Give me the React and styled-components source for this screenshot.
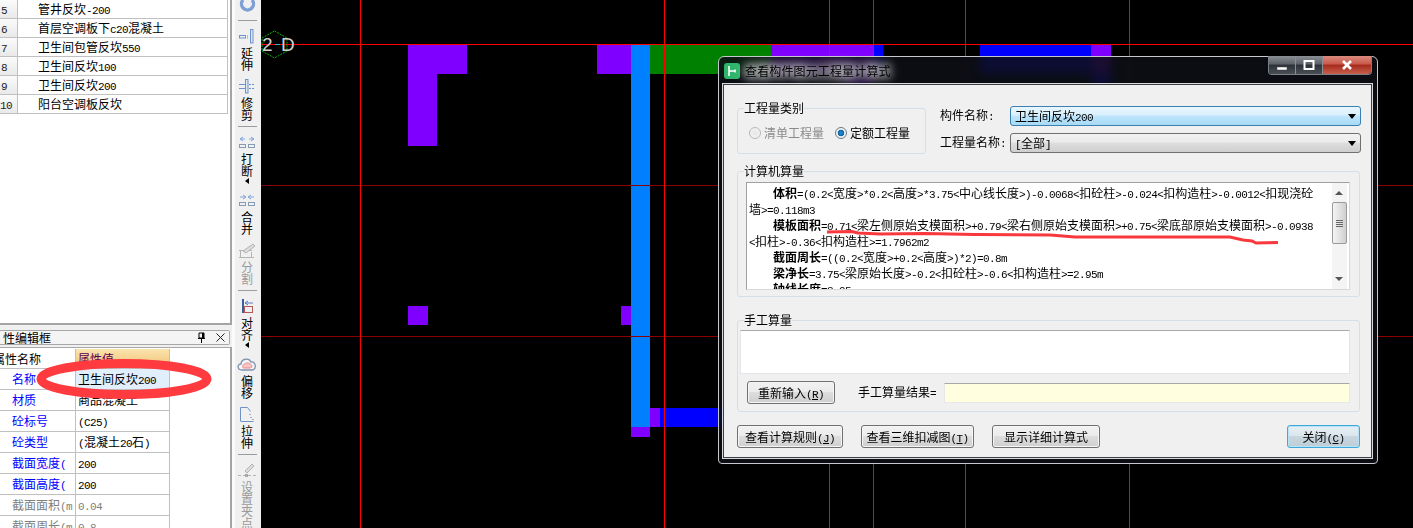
import React from 'react'
import styled, { createGlobalStyle } from 'styled-components'

const GlobalStyle = createGlobalStyle`
    html, body {
        margin: 0;
        padding: 0;
        background: #000;
    }
    * {
        box-sizing: border-box;
    }
`

const Page = styled.div`
    display: flex;
    width: 1413px;
    height: 528px;
    overflow: hidden;
    font-family: "Noto Sans CJK SC", "Liberation Sans", sans-serif;
    font-size: 12px;
    line-height: 16px;
    color: #000;
`

const Latin = styled.span`
    font-family: "Liberation Mono", monospace;
    font-size: 11px;
    letter-spacing: -0.6px;
    font-weight: inherit;
`

// half width ascii next to full width hanzi, like the SimSun of the original
const Mixed = ({ text }) => (
    <>
        {text.split(/([\x00-\x7f]+)/).filter(Boolean).map((part, i) =>
            /^[\x00-\x7f]/.test(part) ? <Latin key={i}>{part}</Latin> : <span key={i}>{part}</span>
        )}
    </>
)

const Hot = ({ letter }) => <Latin>(<u>{letter}</u>)</Latin>

/* left side */

const Side = styled.div`
    position: relative;
    display: flex;
    flex-direction: column;
    flex: none;
    width: 232px;
    height: 528px;
    background: #f0f0f0;
`

const ListPanel = styled.div`
    flex: none;
    height: 325px;
    background: #fff;
    border-right: 2px solid #a4a4a4;
    border-bottom: 2px solid #a4a4a4;
`

const ListRow = styled.div`
    display: flex;
    width: 228px;
    height: 19px;
    line-height: 18px;
    border-bottom: 1px solid #c0c0c0;
    border-right: 1px solid #c0c0c0;
`

const ListNum = styled.div`
    flex: none;
    width: 18px;
    padding-right: 9px;
    text-align: center;
    white-space: nowrap;
    background: linear-gradient(#fbfbfb, #e9e9e9);
    border-right: 1px solid #c0c0c0;
    color: #222;
`

const ListName = styled.div`
    padding-left: 20px;
    white-space: nowrap;
`

const PanelHeader = styled.div`
    display: flex;
    align-items: center;
    flex: none;
    width: 230px;
    height: 15px;
    margin-top: 5px;
    overflow: hidden;
    background: #f4f4f4;
    border: 1px solid #a8a8a8;
    border-left: none;
    border-radius: 0 2px 2px 0;
`

const PanelTitle = styled.div`
    flex: 1;
    padding-left: 3px;
    line-height: 14px;
    white-space: nowrap;
`

const PanelButton = styled.svg`
    flex: none;
    width: 11px;
    height: 11px;
    margin-right: ${(p) => p.$mr}px;
`

const PropBody = styled.div`
    flex: 1;
    margin-top: 2px;
    padding-top: 1px;
    background: #fff;
    border-top: 1px solid #a8a8a8;
    border-right: 2px solid #a4a4a4;
    overflow: hidden;
`

const PropRow = styled.div`
    display: flex;
    width: 170px;
    height: ${(p) => (p.$head ? 20 : 21)}px;
    line-height: 20px;
    border-bottom: 1px solid #c0c0c0;
`

const PropName = styled.div`
    flex: none;
    width: 76px;
    overflow: hidden;
    white-space: nowrap;
    padding-left: ${(p) => (p.$head ? 0 : 12)}px;
    text-indent: ${(p) => (p.$head ? -7 : 0)}px;
    color: ${(p) => (p.$head ? '#000' : p.$off ? '#808080' : '#0000ff')};
    border-right: 1px solid #c0c0c0;
`

const PropValue = styled.div`
    flex: none;
    width: 94px;
    padding-left: 2px;
    overflow: hidden;
    white-space: nowrap;
    color: ${(p) => (p.$head ? '#5c0050' : p.$off ? '#808080' : '#000')};
    background: ${(p) =>
        p.$head ? 'linear-gradient(#fbe3ae, #f2c274)' : p.$sel ? '#e1eefb' : 'transparent'};
    border-right: 1px solid #c0c0c0;
`

const Oval = styled.svg`
    position: absolute;
    left: 36px;
    top: 359px;
    width: 176px;
    height: 40px;
`

/* vertical toolbar */

const Toolbar = styled.div`
    display: flex;
    flex-direction: column;
    align-items: center;
    flex: none;
    width: 29px;
    height: 528px;
    padding-right: 2px;
    overflow: hidden;
    background: #f0f0f0;
    border-left: 3px solid #fbfbfb;
`

const ToolSep = styled.div`
    flex: none;
    width: 19px;
    height: 1px;
    margin-top: 5px;
    background: #9c9c9c;
`

const ToolItem = styled.div`
    display: flex;
    flex-direction: column;
    align-items: center;
    flex: none;
    margin-top: 8px;
`

const ToolIcon = styled.svg`
    display: block;
    flex: none;
    width: 20px;
    height: 15px;
`

const ToolLabel = styled.div`
    width: 12px;
    margin-top: 3px;
    line-height: 12px;
    color: ${(p) => (p.$off ? '#9a9a9a' : '#000')};
`

const ToolArrow = styled.div`
    width: 0;
    height: 0;
    margin-top: 1px;
    margin-bottom: 1px;
    border-top: 3px solid transparent;
    border-bottom: 3px solid transparent;
    border-right: 4px solid #000;
`

const BLUE = '#6f93c9'
const GREY = '#b4b4b4'

const icons = {
    extend: (
        <>
            <rect x="2.5" y="6.5" width="6" height="2.5" fill="none" stroke={BLUE} />
            <path d="M10 7h1M10 9h1" stroke={BLUE} />
            <rect x="13.5" y="0.5" width="2.5" height="13.5" fill="#dce6f5" stroke={BLUE} />
        </>
    ),
    trim: (
        <>
            <rect x="8.5" y="0.5" width="2.5" height="13.5" fill="#dce6f5" stroke={BLUE} />
            <path d="M2 5.5h6M2 9.5h6" stroke={BLUE} />
            <path d="M12 5.5h6M12 9.5h6" stroke={BLUE} strokeDasharray="2 1" />
        </>
    ),
    breakLine: (
        <>
            <path d="M3 4h5M6 2l-3 2 3 2M12 4h5M14 2l3 2-3 2" stroke="#7fa4dc" fill="none" />
            <rect x="2.5" y="9.5" width="6" height="3" fill="none" stroke="#8a9bb5" />
            <rect x="11.5" y="9.5" width="6" height="3" fill="none" stroke="#8a9bb5" />
        </>
    ),
    merge: (
        <>
            <path d="M3 4h5M6 2l3 2-3 2M12 4h5M14 2l-3 2 3 2" stroke="#7fa4dc" fill="none" />
            <rect x="2.5" y="9.5" width="6" height="3" fill="none" stroke="#8a9bb5" />
            <rect x="11.5" y="9.5" width="6" height="3" fill="none" stroke="#8a9bb5" />
        </>
    ),
    split: (
        <>
            <path d="M2 7.5h13M3.5 7.5v6.5M14.5 9v5M2 14.5h15" stroke={GREY} fill="none" />
            <path d="M6 8l10-7 2 2-9 7z" fill="#dcdcdc" stroke={GREY} />
        </>
    ),
    align: (
        <>
            <path d="M6 0v14" stroke="#3c5f9c" strokeWidth="2" />
            <path d="M8 4h8M11 2l-3 2 3 2" stroke="#5b7fc0" fill="none" />
            <rect x="7.5" y="7.5" width="8" height="6" fill="none" stroke="#b05a5a" />
        </>
    ),
    offset: (
        <>
            <path d="M5 13c-5 0-5-6-1-6 0-5 8-7 10-2 5-1 6 8 1 8z" fill="#f4f6fa" stroke="#7f93ad" strokeWidth="1.3" />
            <path d="M7 11c-2 0-2-3 0-3 0-2 5-3 6-1 2 0 3 4 0 4z" fill="#f6c4c4" stroke="#e88" />
        </>
    ),
    stretch: (
        <>
            <path d="M3.5 14V0.5h7l3 4" fill="none" stroke={BLUE} />
            <path d="M3.5 14.5h13" stroke={BLUE} />
            <path d="M13 7v1M14 10v1M16 12v1" stroke="#667" />
        </>
    ),
    grip: (
        <>
            <path d="M8 8l7-7 2 2-7 7z" fill="#dcdcdc" stroke={GREY} />
            <path d="M1 12.5h18" stroke={GREY} strokeDasharray="3 2" />
            <rect x="8" y="11" width="3" height="3" fill="#a8a8a8" />
        </>
    ),
}

const Tool = ({ icon, label, off, arrow }) => (
    <ToolItem>
        <ToolIcon viewBox="0 0 20 15">{icons[icon]}</ToolIcon>
        <ToolLabel $off={off}>{label}</ToolLabel>
        {arrow && <ToolArrow />}
    </ToolItem>
)

/* cad canvas */

const Canvas = styled.div`
    position: relative;
    flex: 1;
    height: 528px;
    background: #000;
`

const Drawing = styled.svg`
    display: block;
    width: 1152px;
    height: 528px;
`

const PURPLE = '#8000ff'
const SKY = '#0080ff'
const PURE_BLUE = '#0000ff'

const shapes = [
    [408, 45, 59, 29, PURPLE],
    [408, 74, 29, 72, PURPLE],
    [597, 45, 34, 29, PURPLE],
    [650, 45, 121, 29, '#008000'],
    [771, 45, 102, 29, PURPLE],
    [845, 74, 28, 30, PURPLE],
    [873, 45, 10, 29, PURE_BLUE],
    [980, 45, 111, 29, PURE_BLUE],
    [1091, 45, 20, 29, PURPLE],
    [1091, 74, 20, 40, PURE_BLUE],
    [408, 306, 20, 19, PURPLE],
    [621, 306, 10, 19, PURPLE],
    [631, 427, 19, 10, PURPLE],
    [650, 408, 10, 19, PURPLE],
    [660, 408, 120, 19, PURE_BLUE],
    [631, 45, 19, 382, SKY],
]

const verticals = [360, 664, 829, 873, 965, 1129]

/* dialog */

const Dialog = styled.div`
    position: absolute;
    left: 457px;
    top: 56px;
    width: 660px;
    height: 408px;
    padding: 0 5px 0 4px;
    background: rgba(12, 15, 22, 0.88);
    backdrop-filter: blur(5px);
    border: 1px solid #c4c8cc;
    border-radius: 6px 6px 4px 4px;
`

const TitleBar = styled.div`
    display: flex;
    align-items: center;
    height: 27px;
`

const TitleIcon = styled.svg`
    flex: none;
    width: 16px;
    height: 16px;
    margin-left: 1px;
`

const TitleText = styled.div`
    flex: 1;
    margin-left: 5px;
    letter-spacing: 0.14px;
    text-shadow: 0 0 8px #fff, 0 0 10px #fff, 0 0 14px rgba(255, 255, 255, 0.9);
`

const CaptionButtons = styled.div`
    display: flex;
    align-self: flex-start;
    flex: none;
    height: 19px;
    margin-top: -1px;
    border: 1px solid #7c8087;
    border-top: none;
    border-radius: 0 0 4px 4px;
    overflow: hidden;
`

const CaptionButton = styled.div`
    display: flex;
    align-items: center;
    justify-content: center;
    width: ${(p) => (p.$close ? 48 : 27)}px;
    border-right: ${(p) => (p.$close ? 'none' : '1px solid #8a8e94')};
    background: ${(p) =>
        p.$close
            ? 'linear-gradient(#d98a7e, #c9594a 45%, #a52a1c 50%, #c8604c)'
            : 'linear-gradient(#8a8f96, #5c6168 45%, #2d3238 50%, #4a4f56)'};
`

const Client = styled.div`
    height: 374px;
    padding: 16px 11px 0 13px;
    background: #f0f0f0;
    border: 1px solid #3a3f45;
    box-shadow: 0 0 0 1px rgba(255, 255, 255, 0.85);
`

const TopRow = styled.div`
    display: flex;
    gap: 14px;
`

const Group = styled.fieldset`
    min-width: 0;
    margin: ${(p) => p.$mt || 0}px 0 0 0;
    padding: ${(p) => p.$pad};
    width: ${(p) => p.$w}px;
    flex: none;
    border: 1px solid #d5dfe6;
    border-radius: 3px;
`

const Legend = styled.legend`
    margin-left: ${(p) => p.$ml}px;
    padding: 0;
    height: 14px;
    line-height: 14px;
`

const RadioRow = styled.div`
    display: flex;
    align-items: center;
    height: 16px;
`

const RadioDot = styled.span`
    flex: none;
    width: 12px;
    height: 12px;
    margin-left: ${(p) => p.$ml}px;
    margin-right: 3px;
    border-radius: 50%;
    border: 1px solid ${(p) => (p.$on ? '#6c7a86' : '#b8b8b8')};
    background: ${(p) =>
        p.$on
            ? 'radial-gradient(circle, #1f8fd6 0, #14659f 3px, #e8eef2 3.6px, #fff 100%)'
            : 'radial-gradient(circle, #e6e6e6, #f6f6f6)'};
`

const RadioText = styled.span`
    color: ${(p) => (p.$off ? '#8a8a8a' : '#000')};
    white-space: nowrap;
`

const FormCol = styled.div`
    display: flex;
    flex-direction: column;
    flex: 1;
    gap: 7px;
    margin: 5px -1px 0 0;
`

const FormRow = styled.div`
    display: flex;
    align-items: center;
    height: 20px;
`

const FormLabel = styled.div`
    flex: none;
    width: 70px;
    white-space: nowrap;
`

const Combo = styled.div`
    position: relative;
    flex: 1;
    height: 20px;
    padding-left: 4px;
    line-height: 18px;
    border: 1px solid ${(p) => (p.$active ? '#3c7fb1' : '#707070')};
    border-radius: 3px;
    background: ${(p) =>
        p.$active
            ? 'linear-gradient(#eaf6fd, #d9f0fc 45%, #bee6fd 50%, #a7d9f5)'
            : 'linear-gradient(#f2f2f2, #ebebeb 45%, #dddddd 50%, #cfcfcf)'};

    &::after {
        content: '';
        position: absolute;
        right: 4px;
        top: 7px;
        border-left: 4px solid transparent;
        border-right: 4px solid transparent;
        border-top: 5px solid #000;
    }
`

const CalcBox = styled.div`
    position: relative;
    display: flex;
    height: 108px;
    overflow: hidden;
    background: #fff;
    border: 1px solid #a0a0a0;
    border-right-color: #d8d8d8;
    border-bottom-color: #d8d8d8;
`

const CalcText = styled.div`
    flex: 1;
    padding: 2px 0 0 2px;
    overflow: hidden;
`

const CalcLine = styled.div`
    height: 16px;
    padding-left: ${(p) => (p.$indent ? 24 : 0)}px;
    white-space: nowrap;
`

const Bold = styled.b`
    font-weight: 700;
`

const ScrollTrack = styled.div`
    position: relative;
    flex: none;
    width: 15px;
    margin-right: 2px;
    background: #f4f4f4;
`

const ScrollArrow = styled.div`
    position: absolute;
    left: 3px;
    ${(p) => (p.$up ? 'top: 8px;' : 'bottom: 8px;')}
    border-left: 4px solid transparent;
    border-right: 4px solid transparent;
    ${(p) => (p.$up ? 'border-bottom' : 'border-top')}: 4px solid #555;
`

const ScrollThumb = styled.div`
    position: absolute;
    left: 0;
    right: 0;
    top: 19px;
    height: 42px;
    display: flex;
    flex-direction: column;
    align-items: center;
    justify-content: center;
    gap: 1px;
    background: linear-gradient(90deg, #f4f4f4, #e2e2e2 50%, #cfcfcf);
    border: 1px solid #9a9a9a;
    border-radius: 2px;
`

const Grip = styled.span`
    width: 7px;
    height: 1px;
    background: #666;
`

const Underline = styled.svg`
    position: absolute;
    left: 79px;
    top: 45px;
    width: 460px;
    height: 18px;
`

const HandBox = styled.div`
    height: 44px;
    background: #fff;
    border: 1px solid #e2e6ea;
    border-top: 1px solid #a8a8a8;
    border-radius: 1px;
`

const ResultRow = styled.div`
    display: flex;
    align-items: center;
    height: 23px;
    margin: 7px 0 0 7px;
`

const ResultLabel = styled.div`
    flex: none;
    margin-left: 23px;
    white-space: nowrap;
`

const ResultInput = styled.div`
    flex: 1;
    height: 20px;
    margin-left: 8px;
    background: #ffffe0;
    border: 1px solid #e8e8e8;
    border-top: 1px solid #a8a8a8;
`

const Button = styled.div`
    flex: none;
    width: ${(p) => p.$w}px;
    height: 23px;
    line-height: 21px;
    text-align: center;
    white-space: nowrap;
    border: 1px solid ${(p) => (p.$main ? '#3ca8dc' : '#707070')};
    border-radius: 3px;
    box-shadow: inset 0 0 0 1px ${(p) => (p.$main ? '#b6e3f7' : '#f6f6f6')};
    background: ${(p) =>
        p.$main
            ? 'linear-gradient(#e6eff5, #dbe6ed 45%, #c9d6df 50%, #bfcdd7)'
            : 'linear-gradient(#f2f2f2, #ebebeb 45%, #dddddd 50%, #cfcfcf)'};
`

const ButtonRow = styled.div`
    display: flex;
    gap: 18px;
    margin-top: 13px;
`

const CloseSlot = styled.div`
    margin-left: auto;
`

const listRows = [
    ['5', '管井反坎-200'],
    ['6', '首层空调板下c20混凝土'],
    ['7', '卫生间包管反坎550'],
    ['8', '卫生间反坎100'],
    ['9', '卫生间反坎200'],
    ['10', '阳台空调板反坎'],
]

const propRows = [
    ['名称', '卫生间反坎200', false, true],
    ['材质', '商品混凝土'],
    ['砼标号', '(C25)'],
    ['砼类型', '(混凝土20石)'],
    ['截面宽度(', '200'],
    ['截面高度(', '200'],
    ['截面面积(m', '0.04', true],
    ['截面周长(m', '0.8', true],
]

const calcLines = [
    ['体积', '=(0.2<宽度>*0.2<高度>*3.75<中心线长度>)-0.0068<扣砼柱>-0.024<扣构造柱>-0.0012<扣现浇砼'],
    [null, '墙>=0.118m3'],
    ['模板面积', '=0.71<梁左侧原始支模面积>+0.79<梁右侧原始支模面积>+0.75<梁底部原始支模面积>-0.0938'],
    [null, '<扣柱>-0.36<扣构造柱>=1.7962m2'],
    ['截面周长', '=((0.2<宽度>+0.2<高度>)*2)=0.8m'],
    ['梁净长', '=3.75<梁原始长度>-0.2<扣砼柱>-0.6<扣构造柱>=2.95m'],
    ['轴线长度', '=3.95'],
]

export default function App() {
    return (
        <Page>
            <GlobalStyle />
            <Side>
                <ListPanel>
                    {listRows.map(([num, name]) => (
                        <ListRow key={num}>
                            <ListNum><Mixed text={num} /></ListNum>
                            <ListName><Mixed text={name} /></ListName>
                        </ListRow>
                    ))}
                </ListPanel>
                <PanelHeader>
                    <PanelTitle>性编辑框</PanelTitle>
                    <PanelButton $mr={8} viewBox="0 0 11 11">
                        <path d="M3 1h5v5H3zM2 6.5h7M5.5 7v4" fill="none" stroke="#000" />
                        <rect x="6" y="1" width="2" height="5" />
                    </PanelButton>
                    <PanelButton $mr={3} viewBox="0 0 11 11">
                        <path d="M1.5 1.5l8 8M9.5 1.5l-8 8" stroke="#222" />
                    </PanelButton>
                </PanelHeader>
                <PropBody>
                    <PropRow $head>
                        <PropName $head>属性名称</PropName>
                        <PropValue $head>属性值</PropValue>
                    </PropRow>
                    {propRows.map(([name, value, off, sel]) => (
                        <PropRow key={name}>
                            <PropName $off={off}><Mixed text={name} /></PropName>
                            <PropValue $off={off} $sel={sel}><Mixed text={value} /></PropValue>
                        </PropRow>
                    ))}
                </PropBody>
                <Oval viewBox="0 0 176 40">
                    <ellipse cx="88" cy="20" rx="83" ry="15.5" fill="none" stroke="#ff3b3f" strokeWidth="9" />
                </Oval>
            </Side>

            <Toolbar>
                <ToolIcon viewBox="0 0 20 15">
                    <path d="M6 0a6 6 0 1 0 9 0" fill="none" stroke="#7e9fd5" strokeWidth="3.4" />
                </ToolIcon>
                <ToolSep />
                <Tool icon="extend" label="延伸" />
                <Tool icon="trim" label="修剪" />
                <ToolSep />
                <Tool icon="breakLine" label="打断" arrow />
                <Tool icon="merge" label="合并" />
                <Tool icon="split" label="分割" off />
                <ToolSep />
                <Tool icon="align" label="对齐" arrow />
                <Tool icon="offset" label="偏移" />
                <Tool icon="stretch" label="拉伸" />
                <ToolSep />
                <Tool icon="grip" label="设置夹点" off />
            </Toolbar>

            <Canvas>
                <Drawing viewBox="261 0 1152 528">
                    {shapes.map(([x, y, w, h, fill], i) => (
                        <rect key={i} x={x} y={y} width={w} height={h} fill={fill} />
                    ))}
                    <path d="M261 185.5H1413M261 336.5H1413" stroke="#8b0000" />
                    {verticals.map((x) => (
                        <path key={x} d={`M${x + 0.5} 0V528`} stroke="#ff0000" />
                    ))}
                    <path d="M261 44.5H1413" stroke="#ff0000" />
                    <polygon points="274.5,31 287,38 287,51 274.5,58 262,51 262,38" fill="none" stroke="#00b000" strokeDasharray="2 1" />
                    <path d="M275 44.5h5" stroke="#20c0c0" />
                    <text x="262" y="51" fontFamily="Liberation Sans" fontSize="19" fill="#d0d0d0">2</text>
                    <text x="281" y="51" fontFamily="Liberation Sans" fontSize="19" fill="#d0d0d0">D</text>
                </Drawing>

                <Dialog>
                    <TitleBar>
                        <TitleIcon viewBox="0 0 16 16">
                            <rect width="16" height="16" rx="3" fill="#2fb56b" />
                            <path d="M5 3v10M5 8h6M11 6.5v3" stroke="#fff" strokeWidth="1.6" fill="none" />
                        </TitleIcon>
                        <TitleText>查看构件图元工程量计算式</TitleText>
                        <CaptionButtons>
                            <CaptionButton>
                                <svg width="12" height="12" viewBox="0 0 12 12">
                                    <rect x="1" y="8" width="10" height="3" fill="#fff" stroke="#444" strokeWidth="0.5" />
                                </svg>
                            </CaptionButton>
                            <CaptionButton>
                                <svg width="12" height="12" viewBox="0 0 12 12">
                                    <rect x="1.5" y="2" width="9" height="8" fill="none" stroke="#fff" strokeWidth="2" />
                                </svg>
                            </CaptionButton>
                            <CaptionButton $close>
                                <svg width="12" height="12" viewBox="0 0 12 12">
                                    <path d="M2 2l8 8M10 2l-8 8" stroke="#fff" strokeWidth="2.6" />
                                </svg>
                            </CaptionButton>
                        </CaptionButtons>
                    </TitleBar>

                    <Client>
                        <TopRow>
                            <Group $w={189} $pad="10px 0 12px 11px">
                                <Legend $ml={-5}>工程量类别</Legend>
                                <RadioRow>
                                    <RadioDot $ml={0} />
                                    <RadioText $off>清单工程量</RadioText>
                                    <RadioDot $ml={11} $on />
                                    <RadioText>定额工程量</RadioText>
                                </RadioRow>
                            </Group>
                            <FormCol>
                                <FormRow>
                                    <FormLabel><Mixed text="构件名称:" /></FormLabel>
                                    <Combo $active><Mixed text="卫生间反坎200" /></Combo>
                                </FormRow>
                                <FormRow>
                                    <FormLabel><Mixed text="工程量名称:" /></FormLabel>
                                    <Combo><Mixed text="[全部]" /></Combo>
                                </FormRow>
                            </FormCol>
                        </TopRow>

                        <Group $w={623} $mt={10} $pad="4px 9px 6px 8px">
                            <Legend $ml={-2}>计算机算量</Legend>
                            <CalcBox>
                                <CalcText>
                                    {calcLines.map(([head, rest], i) => (
                                        <CalcLine key={i} $indent={!!head}>
                                            {head && <Bold>{head}</Bold>}
                                            <Mixed text={rest} />
                                        </CalcLine>
                                    ))}
                                </CalcText>
                                <ScrollTrack>
                                    <ScrollArrow $up />
                                    <ScrollThumb>
                                        <Grip /><Grip /><Grip /><Grip />
                                    </ScrollThumb>
                                    <ScrollArrow />
                                </ScrollTrack>
                                <Underline viewBox="826 228 460 18">
                                    <path
                                        d="M827 232L852 231.5L858 233L880 234L925 233.5L978 234.5L1050 235L1075 237L1230 237L1243 240L1252 241L1256 243L1278 242.5"
                                        fill="none"
                                        stroke="#f8383c"
                                        strokeWidth="3"
                                    />
                                </Underline>
                            </CalcBox>
                        </Group>

                        <Group $w={623} $mt={16} $pad="3px 9px 7px 2px">
                            <Legend $ml={4}>手工算量</Legend>
                            <HandBox />
                            <ResultRow>
                                <Button $w={88}>重新输入<Hot letter="R" /></Button>
                                <ResultLabel><Mixed text="手工算量结果=" /></ResultLabel>
                                <ResultInput />
                            </ResultRow>
                        </Group>

                        <ButtonRow>
                            <Button $w={106}>查看计算规则<Hot letter="J" /></Button>
                            <Button $w={113}>查看三维扣减图<Hot letter="T" /></Button>
                            <Button $w={108}>显示详细计算式</Button>
                            <CloseSlot>
                                <Button $w={73} $main>关闭<Hot letter="C" /></Button>
                            </CloseSlot>
                        </ButtonRow>
                    </Client>
                </Dialog>
            </Canvas>
        </Page>
    )
}
